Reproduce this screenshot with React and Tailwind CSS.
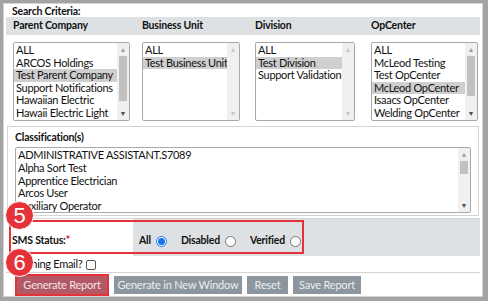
import React from 'react';

const font = { fontFamily: 'Lato, "Open Sans", sans-serif' };

const Scrollbar = ({ thumbTop, thumbHeight, dim }) => (
  <div className="relative w-[12px] h-full bg-[#f0f0f0] flex flex-col items-center justify-between py-[3px]">
    <span className={`text-[7px] leading-none ${dim ? 'text-[#c8c8c8]' : 'text-[#a0a0a0]'}`}>▲</span>
    {thumbHeight ? (
      <div
        className="absolute left-[2px] w-[8px] bg-[#c1c1c1]"
        style={{ top: thumbTop, height: thumbHeight }}
      />
    ) : null}
    <span className={`text-[7px] leading-none ${dim ? 'text-[#c8c8c8]' : 'text-[#505050]'}`}>▼</span>
  </div>
);

const ListBox = ({ items, selected, width, thumbTop, thumbHeight }) => (
  <div
    className="h-[79px] border border-[#a9a9a9] rounded-[2px] flex bg-white overflow-hidden"
    style={{ width }}
  >
    <div className="flex-1 pt-[1px] overflow-hidden">
      {items.map((it) => (
        <div
          key={it}
          className={`h-[12.6px] leading-[12.6px] text-[11px] tracking-[-0.3px] text-[#111] pl-[2px] whitespace-nowrap ${
            it === selected ? 'bg-[#cfcfcf]' : ''
          }`}
        >
          {it}
        </div>
      ))}
    </div>
    <Scrollbar thumbTop={thumbTop} thumbHeight={thumbHeight} dim={!thumbHeight} />
  </div>
);

const Radio = ({ checked }) => (
  <span
    className={`inline-flex items-center justify-center w-[11px] h-[11px] rounded-full border ml-[5px] bg-white ${
      checked ? 'border-[#1a73e8]' : 'border-[#767676]'
    }`}
  >
    {checked ? <span className="block w-[7px] h-[7px] rounded-full bg-[#1a73e8]" /> : null}
  </span>
);

const Badge = ({ n, className }) => (
  <div
    className={`absolute w-[29px] h-[29px] rounded-full bg-[#e53238] border border-white text-white text-[22px] leading-[27px] text-center ${className}`}
    style={{ fontFamily: 'Arial, "Liberation Sans", sans-serif' }}
  >
    {n}
  </div>
);

export default function App() {
  const columns = [
    { title: 'Parent Company', w: 117, items: ['ALL', 'ARCOS Holdings', 'Test Parent Company', 'Support Notifications', 'Hawaiian Electric', 'Hawaii Electric Light'], sel: 'Test Parent Company', thumbTop: 13, thumbHeight: 45 },
    { title: 'Business Unit', w: 98, items: ['ALL', 'Test Business Unit'], sel: 'Test Business Unit' },
    { title: 'Division', w: 100, items: ['ALL', 'Test Division', 'Support Validation'], sel: 'Test Division' },
    { title: 'OpCenter', w: 107, items: ['ALL', 'McLeod Testing', 'Test OpCenter', 'McLeod OpCenter', 'Isaacs OpCenter', 'Welding OpCenter'], sel: 'McLeod OpCenter', thumbTop: 13, thumbHeight: 40 },
  ];
  const colWidths = ['w-[129px]', 'w-[113px]', 'w-[116px]', 'flex-1'];

  return (
    <div className="relative w-[488px] h-[301px] bg-[#a3a3a3] pt-[3px] pl-[3px] pr-[5px] pb-[4px]" style={font}>
      <div className="w-full h-full bg-white border border-[#d4d4d4] flex flex-col px-[2px] overflow-hidden">
        {/* Search criteria */}
        <div className="shrink-0 h-[13px] text-[10.5px] leading-[15px] font-bold tracking-[-0.2px] text-[#111] pl-[6px]">Search Criteria:</div>
        <div className="shrink-0 h-[18px] bg-[#dde1e4] flex items-center pl-[7px] text-[10.5px] font-bold tracking-[-0.2px] text-[#111]">
          {columns.map((c, i) => (
            <div key={c.title} className={colWidths[i]}>{c.title}</div>
          ))}
        </div>
        <div className="shrink-0 flex pl-[7px] pt-[7px] h-[91px]">
          {columns.map((c, i) => (
            <div key={c.title} className={colWidths[i]}>
              <ListBox items={c.items} selected={c.sel} width={c.w} thumbTop={c.thumbTop} thumbHeight={c.thumbHeight} />
            </div>
          ))}
        </div>

        {/* Classification */}
        <div className="shrink-0 h-[90px] border border-[#d4d4d4] mx-[1px] px-[7px]">
          <div className="h-[20px] text-[10.5px] leading-[18px] font-bold tracking-[-0.2px] text-[#111] pt-[1px]">Classification(s)</div>
          <div className="h-[66px] border border-[#a9a9a9] rounded-[2px] flex bg-white overflow-hidden">
            <div className="flex-1 pt-[1px] pl-[2px] overflow-hidden">
              {['ADMINISTRATIVE ASSISTANT.S7089', 'Alpha Sort Test', 'Apprentice Electrician', 'Arcos User', 'Auxiliary Operator'].map((t) => (
                <div key={t} className="h-[12.8px] leading-[12.8px] text-[11px] tracking-[-0.3px] text-[#111] whitespace-nowrap">{t}</div>
              ))}
            </div>
            <Scrollbar thumbTop={13} thumbHeight={13} />
          </div>
        </div>

        {/* SMS status */}
        <div className="shrink-0 flex h-[38px] border-t border-[#d4d4d4] mt-[2px]">
          <div className="w-[127px] flex items-center pl-[6px] pt-[7px] text-[10.5px] font-bold tracking-[-0.2px] text-[#111]">
            SMS Status:<span className="text-[#d0021b]">*</span>
          </div>
          <div className="flex-1 bg-[#dde1e4] flex items-center pt-[7px] pl-[6px] text-[10.5px] font-bold tracking-[-0.2px] text-[#111] gap-[14px]">
            <span className="flex items-center">All<Radio checked /></span>
            <span className="flex items-center">Disabled<Radio /></span>
            <span className="flex items-center">Verified<Radio /></span>
          </div>
        </div>
        <div className="shrink-0 h-[16px] flex items-center pl-[6px] pt-[1px] text-[11px] tracking-[-0.3px] text-[#111]">
          Warning Email?
          <span className="inline-block w-[10px] h-[10px] border border-[#555] rounded-[2px] ml-[4px] bg-white" />
        </div>

        {/* Buttons */}
        <div className="shrink-0 flex items-center gap-[5px] border-t border-[#d4d4d4] pt-[1px] pl-[9px]">
          <div className="border-2 border-[#e53238]">
            <button className="block w-[90px] h-[18px] bg-[#b25965] text-[#f1e6e8] text-[11px] tracking-[-0.2px]">Generate Report</button>
          </div>
          <button className="w-[128px] h-[18px] bg-[#8d969e] text-[#eceef0] text-[11px] tracking-[-0.2px]">Generate in New Window</button>
          <button className="w-[41px] h-[18px] bg-[#8d969e] text-[#eceef0] text-[11px] tracking-[-0.2px]">Reset</button>
          <button className="w-[68px] h-[18px] bg-[#8d969e] text-[#eceef0] text-[11px] tracking-[-0.2px]">Save Report</button>
        </div>
      </div>

      {/* Annotation overlays */}
      <div className="absolute left-[9px] top-[220px] w-[295px] h-[34px] border-2 border-[#e53238]" />
      <Badge n="5" className="left-[5px] top-[201px]" />
      <Badge n="6" className="left-[5px] top-[248px]" />
    </div>
  );
}
